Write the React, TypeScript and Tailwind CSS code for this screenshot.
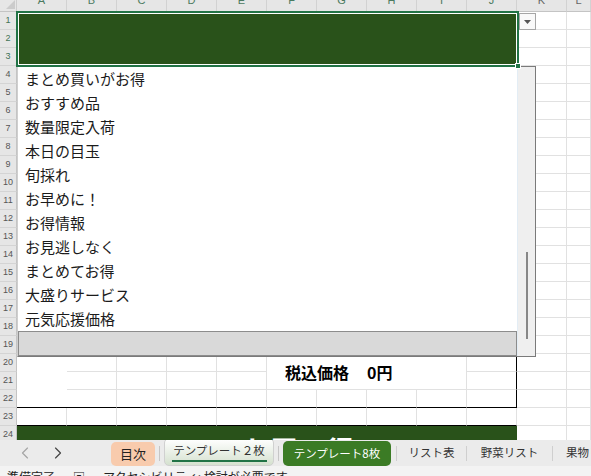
import type { ReactNode } from "react";
import { ChevronLeft, ChevronRight } from "lucide-react";

const COLS = ["A", "B", "C", "D", "E", "F", "G", "H", "I", "J", "K", "L"];

const ITEMS = [
  "まとめ買いがお得",
  "おすすめ品",
  "数量限定入荷",
  "本日の目玉",
  "旬採れ",
  "お早めに！",
  "お得情報",
  "お見逃しなく",
  "まとめてお得",
  "大盛りサービス",
  "元気応援価格",
];

function Sheet() {
  const cells: ReactNode[] = [];

  cells.push(
    <div
      key="corner"
      className="border-r border-b border-r-[#cdcdcd] border-b-[#c4c4c4] bg-[#e6e6e6]"
    >
      <svg width="17" height="11" viewBox="0 0 17 11">
        <polygon points="15,0 15,9 6,9" fill="#cbcbcb" />
      </svg>
    </div>
  );

  COLS.forEach((c, i) =>
    cells.push(
      <div
        key={c}
        className="overflow-hidden border-r border-b border-r-[#d2d2d2] border-b-[#c4c4c4] bg-[#e6e6e6] text-center font-['Liberation_Sans',sans-serif]"
      >
        <div
          className={`-mt-[7px] text-[11px] leading-[14px] ${
            i <= 9 ? "text-[#4b7a5f]" : "text-[#666]"
          }`}
        >
          {c}
        </div>
      </div>
    )
  );

  for (let r = 1; r <= 24; r++) {
    cells.push(
      <div
        key={`h${r}`}
        className={`flex items-center justify-center border-r border-b border-r-[#c4c4c4] border-b-[#d4d4d4] bg-[#e6e6e6] font-['Liberation_Sans',sans-serif] text-[9px] ${
          r <= 3 ? "text-[#3f7356]" : "text-[#555]"
        }`}
      >
        {r}
      </div>
    );

    COLS.forEach((c, ci) => {
      const key = `${c}${r}`;

      // merged A1:J3 (green header block)
      if (r <= 3 && ci <= 9) {
        if (r === 1 && ci === 0)
          cells.push(<div key={key} className="col-[2/12] row-[2/5] bg-[#29521a]" />);
        return;
      }
      // merged A20:A22
      if (ci === 0 && r >= 20 && r <= 22) {
        if (r === 20)
          cells.push(
            <div key={key} className="col-[2/3] row-[21/24] border-b border-b-black" />
          );
        return;
      }
      // merged F20:I21 price
      if (r >= 20 && r <= 21 && ci >= 5 && ci <= 8) {
        if (r === 20 && ci === 5)
          cells.push(
            <div
              key={key}
              className="col-[7/11] row-[21/23] flex items-center gap-[18px] border-r border-b border-[#e1e1e1] pl-[18px] text-[16px] font-bold text-black"
            >
              <span>税込価格</span>
              <span>0円</span>
            </div>
          );
        return;
      }
      // merged A24:J24 green footer block
      if (r === 24 && ci <= 9) {
        if (ci === 0)
          cells.push(
            <div
              key={key}
              className="col-[2/12] row-[25/26] overflow-hidden bg-[#29521a]"
            >
              <div className="ml-[225px] mt-[7px] whitespace-nowrap text-[28px] font-bold leading-[34px] text-white">
                お買い得
              </div>
            </div>
          );
        return;
      }

      const right =
        r >= 20 && r <= 22 && ci === 9 ? "border-r-black" : "border-r-[#e1e1e1]";
      const bottom =
        (r === 22 || r === 23) && ci <= 9 ? "border-b-black" : "border-b-[#e1e1e1]";
      cells.push(<div key={key} className={`border-r border-b ${right} ${bottom}`} />);
    });
  }

  return (
    <div className="relative h-[440px] overflow-hidden">
      <div className="grid grid-cols-[17px_repeat(11,50px)_1fr] grid-rows-[12px_repeat(24,18px)]">
        {cells}
      </div>

      {/* validation dropdown list */}
      <div className="absolute left-[17px] top-[66px] flex h-[291px] w-[519px] border border-[#7a7a7a] border-l-[#cfcfcf] bg-white">
        <div className="flex-1">
          {ITEMS.map((t) => (
            <div
              key={t}
              className="h-[24px] whitespace-nowrap pl-[7px] text-[15px] leading-[24px] text-[#1b1b1b]"
            >
              {t}
            </div>
          ))}
          <div className="h-[25px] border border-[#8c8c8c] bg-[#d9d9d9]" />
        </div>
        <div className="w-[18px] border-l border-l-[#e3edf5] bg-[#efefef]">
          <div className="ml-[8px] mt-[185px] h-[87px] w-[2px] bg-[#878787]" />
        </div>
      </div>

      {/* selection A1:J3 */}
      <div className="absolute left-[16px] top-[11px] h-[56px] w-[503px] border-2 border-[#217346] shadow-[inset_0_0_0_1px_#fff]">
        <div className="absolute -bottom-[4px] -right-[4px] h-[6px] w-[6px] border border-white bg-[#217346]" />
      </div>

      {/* dropdown button */}
      <div className="absolute left-[519px] top-[13px] flex h-[17px] w-[17px] items-center justify-center border border-[#a6a6a6] bg-[#f9f9f9]">
        <svg width="7" height="4" viewBox="0 0 7 4">
          <polygon points="0,0 7,0 3.5,4" fill="#555" />
        </svg>
      </div>
    </div>
  );
}

function Sep() {
  return (
    <div className="flex h-[26px] w-[9px] shrink-0 items-center justify-center">
      <div className="h-[15px] w-px bg-[#c6c6c6]" />
    </div>
  );
}

function Line() {
  return (
    <div className="flex h-[26px] w-px shrink-0 items-center">
      <div className="h-[15px] w-px bg-[#cfcfcf]" />
    </div>
  );
}

function TabBar() {
  return (
    <div className="flex h-[26px] items-end overflow-visible bg-[#ebebeb] text-[#333]">
      <div className="flex h-[26px] w-[111px] shrink-0 items-center gap-[13px] pl-[15px]">
        <ChevronLeft size={20} strokeWidth={1.4} className="shrink-0 text-[#a5a5a5]" />
        <ChevronRight size={20} strokeWidth={1.4} className="shrink-0 text-[#444]" />
      </div>
      <div className="flex h-[24px] w-[44px] shrink-0 items-center justify-center rounded-[5px] bg-[#f8cbad] text-[13px] text-[#222]">
        目次
      </div>
      <Sep />
      <div className="flex h-[28px] w-[110px] shrink-0 flex-col items-center justify-end rounded-[5px] border border-[#d0d0d0] bg-linear-to-b from-white to-[#d5e1cf] pb-[3px]">
        <div className="whitespace-nowrap text-[11.5px] leading-[16px] text-[#333]">
          テンプレート２枚
        </div>
        <div className="mt-[2px] h-[2px] w-[95px] bg-[#217346]" />
      </div>
      <Sep />
      <div className="flex h-[25px] w-[108px] shrink-0 items-center justify-center whitespace-nowrap rounded-[5px] bg-[#3b7b25] text-[11.5px] text-white">
        テンプレート8枚
      </div>
      <div className="w-[5px] shrink-0" />
      <Line />
      <div className="flex h-[26px] w-[69px] shrink-0 items-center justify-center whitespace-nowrap text-[11.5px]">
        リスト表
      </div>
      <Line />
      <div className="flex h-[26px] w-[85px] shrink-0 items-center justify-center whitespace-nowrap text-[11.5px]">
        野菜リスト
      </div>
      <Line />
      <div className="flex h-[26px] shrink-0 items-center whitespace-nowrap pl-[13px] text-[11.5px]">
        果物リスト
      </div>
    </div>
  );
}

export default function App() {
  return (
    <div className="h-[476px] w-[591px] overflow-hidden bg-white font-['Noto_Sans_CJK_JP','Noto_Sans',sans-serif]">
      <Sheet />
      <TabBar />
      <div className="h-[10px] overflow-hidden bg-[#f3f3f3]">
        <div className="mt-[3px] flex items-start gap-[18px] whitespace-nowrap pl-[7px] text-[12px] leading-[16px] text-[#222]">
          <span>準備完了</span>
          <span>▣</span>
          <span>アクセシビリティ: 検討が必要です</span>
        </div>
      </div>
    </div>
  );
}
